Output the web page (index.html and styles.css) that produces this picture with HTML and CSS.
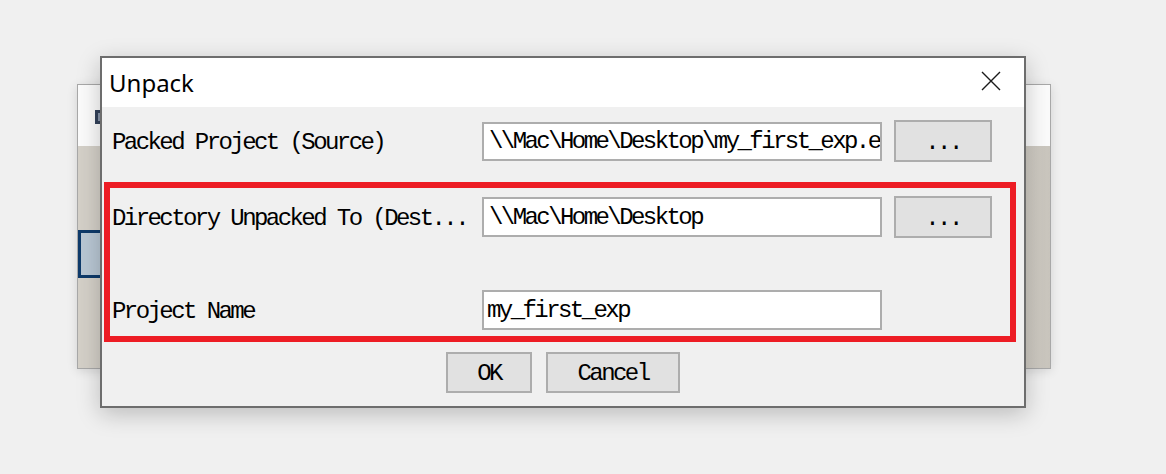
FILE: index.html
```html
<!DOCTYPE html>
<html>
<head>
<meta charset="utf-8">
<title>Unpack</title>
<link rel="stylesheet" href="styles.css">
</head>
<body>
<div class="desktop">
  <div class="bgwin">
    <div class="bgwin-title"><span class="bgwin-icon"></span></div>
    <div class="bgwin-body"><span class="bgwin-sel"></span></div>
  </div>

  <div class="dialog">
    <div class="titlebar">
      <span class="title">Unpack</span>
      <svg class="close" width="20" height="20" viewBox="0 0 20 20" aria-hidden="true">
        <path d="M1 1 L19 19 M19 1 L1 19" stroke="#1a1a1a" stroke-width="1.4" fill="none"/>
      </svg>
    </div>
    <div class="body">
      <div class="row row-src">
        <span class="label">Packed Project (Source)</span>
        <div class="field field-src">\\Mac\Home\Desktop\my_first_exp.ebz</div>
        <button class="btn browse">...</button>
      </div>
      <div class="highlight">
        <div class="row row-dest">
          <span class="label">Directory Unpacked To (Dest...</span>
          <div class="field">\\Mac\Home\Desktop</div>
          <button class="btn browse">...</button>
        </div>
        <div class="row row-name">
          <span class="label">Project Name</span>
          <div class="field field-name">my_first_exp</div>
        </div>
      </div>
      <div class="actions">
        <button class="btn ok">OK</button>
        <button class="btn cancel">Cancel</button>
      </div>
    </div>
  </div>
</div>
</body>
</html>
```
FILE: styles.css
```css
html, body {
  margin: 0;
  padding: 0;
  background: #f0f0f0;
}

.desktop {
  position: relative;
  width: 1166px;
  height: 474px;
  overflow: hidden;
  background: #f0f0f0;
}

/* background window partly hidden behind the dialog */
.bgwin {
  position: absolute;
  left: 77px;
  top: 84px;
  width: 974px;
  height: 285px;
  box-sizing: border-box;
  border: 1px solid #a8a8a8;
  display: flex;
  flex-direction: column;
  box-shadow: 0 2px 10px rgba(0, 0, 0, 0.12);
}

.bgwin-title {
  height: 61px;
  background: #fbfbfb;
  padding: 25px 0 0 17px;
  box-sizing: border-box;
}

.bgwin-icon {
  display: block;
  width: 10px;
  height: 14px;
  background: #33415a;
  box-shadow: inset 0 0 0 3px #33415a, inset 0 0 0 5px #8a96aa;
}

.bgwin-body {
  flex: 1;
  background: linear-gradient(to right, #d4d0c8 0, #d4d0c8 96%, #c9c5bd 100%);
  padding-top: 84px;
  box-sizing: border-box;
}

.bgwin-sel {
  display: block;
  width: 40px;
  height: 48px;
  box-sizing: border-box;
  border: 3px solid #0e3a6a;
  background: #b9c7d4;
}

/* dialog */
.dialog {
  position: absolute;
  left: 100px;
  top: 56px;
  width: 926px;
  box-sizing: border-box;
  border: 2px solid #6d6d6d;
  background: #f0f0f0;
  box-shadow: 0 6px 22px rgba(0, 0, 0, 0.22);
  display: flex;
  flex-direction: column;
}

.titlebar {
  height: 49px;
  background: #ffffff;
  display: flex;
  align-items: flex-start;
  padding-left: 7px;
  box-sizing: border-box;
}

.title {
  font-family: "Noto Sans", "Open Sans", sans-serif;
  font-size: 24px;
  line-height: 32px;
  margin-top: 9px;
  color: #000;
}

.close {
  margin-left: auto;
  margin-right: 23px;
  margin-top: 13px;
}

.body {
  padding: 13px 8px 13px 2px;
  display: flex;
  flex-direction: column;
  font-family: "Liberation Mono", "DejaVu Sans Mono", monospace;
  font-size: 24px;
  letter-spacing: -2.57px;
  color: #000;
}

.row {
  display: grid;
  grid-template-columns: 358px 400px 98px;
  column-gap: 12px;
  align-items: center;
  height: 42px;
}

.row-src {
  margin-left: 8px;
}

.label {
  white-space: nowrap;
  line-height: 26px;
  padding-top: 3px;
}

.field {
  height: 40px;
  box-sizing: border-box;
  border: 2px solid #adadad;
  background: #ffffff;
  padding: 2px 0 0 5px;
  white-space: nowrap;
  overflow: hidden;
  display: flex;
  align-items: center;
  line-height: 26px;
}

.field-src {
  height: 39px;
}

.field-name {
  padding-left: 3px;
}

.highlight {
  margin-top: 20px;
  border: 6px solid #ed1c24;
  padding: 8px 0 6px 2px;
}

.row-name {
  margin-top: 52px;
  height: 40px;
}

.btn {
  font-family: inherit;
  font-size: inherit;
  letter-spacing: inherit;
  color: #000;
  background: #e1e1e1;
  border: 2px solid #adadad;
  border-radius: 0;
  padding: 0;
  margin: 0;
  box-sizing: border-box;
  line-height: 26px;
}

.browse {
  width: 98px;
  height: 42px;
  padding-top: 4px;
}

.actions {
  margin-top: 10px;
  display: flex;
  justify-content: center;
  gap: 14px;
  padding-left: 6px;
}

.ok {
  width: 86px;
  height: 41px;
  padding-top: 3px;
}

.cancel {
  width: 134px;
  height: 41px;
  padding-top: 3px;
}
```
